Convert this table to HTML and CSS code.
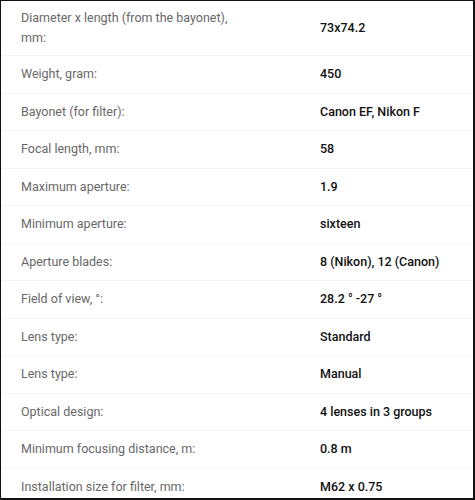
FILE: index.html
```html
<!DOCTYPE html>
<html>
<head>
<meta charset="utf-8">
<link rel="stylesheet" href="styles.css">
</head>
<body>
<div class="frame">
  <div class="specs">
    <div class="row tall"><div class="label">Diameter x length (from the bayonet), mm:</div><div class="value">73x74.2</div></div>
    <div class="row"><div class="label">Weight, gram:</div><div class="value">450</div></div>
    <div class="row"><div class="label">Bayonet (for filter):</div><div class="value">Canon EF, Nikon F</div></div>
    <div class="row"><div class="label">Focal length, mm:</div><div class="value">58</div></div>
    <div class="row"><div class="label">Maximum aperture:</div><div class="value">1.9</div></div>
    <div class="row"><div class="label">Minimum aperture:</div><div class="value">sixteen</div></div>
    <div class="row"><div class="label">Aperture blades:</div><div class="value">8 (Nikon), 12 (Canon)</div></div>
    <div class="row"><div class="label">Field of view, °:</div><div class="value">28.2 ° -27 °</div></div>
    <div class="row"><div class="label">Lens type:</div><div class="value">Standard</div></div>
    <div class="row"><div class="label">Lens type:</div><div class="value">Manual</div></div>
    <div class="row"><div class="label">Optical design:</div><div class="value">4 lenses in 3 groups</div></div>
    <div class="row"><div class="label">Minimum focusing distance, m:</div><div class="value">0.8 m</div></div>
    <div class="row"><div class="label">Installation size for filter, mm:</div><div class="value">M62 x 0.75</div></div>
  </div>
</div>
</body>
</html>
```
FILE: styles.css
```css
html, body {
  margin: 0;
  padding: 0;
  background: #fff;
  overflow: hidden;
}
.frame {
  width: 475px;
  height: 500px;
  box-sizing: border-box;
  border-style: solid;
  border-color: #111;
  border-width: 1px 2px 2px 1px;
  overflow: hidden;
  font-family: Roboto, "Liberation Sans", sans-serif;
  font-size: 12.5px;
}
.specs {
  display: flex;
  flex-direction: column;
}
.row {
  display: grid;
  grid-template-columns: 319px 1fr;
  align-items: center;
  height: 37.5px;
  border-bottom: 1px solid #f5f5f5;
  box-sizing: border-box;
}
.row.tall {
  height: 55px;
}
.label {
  padding: 0 84px 0 20px;
  color: #686868;
  line-height: 20px;
}
.value {
  color: #111;
  font-weight: 500;
  line-height: 20px;
}
```
